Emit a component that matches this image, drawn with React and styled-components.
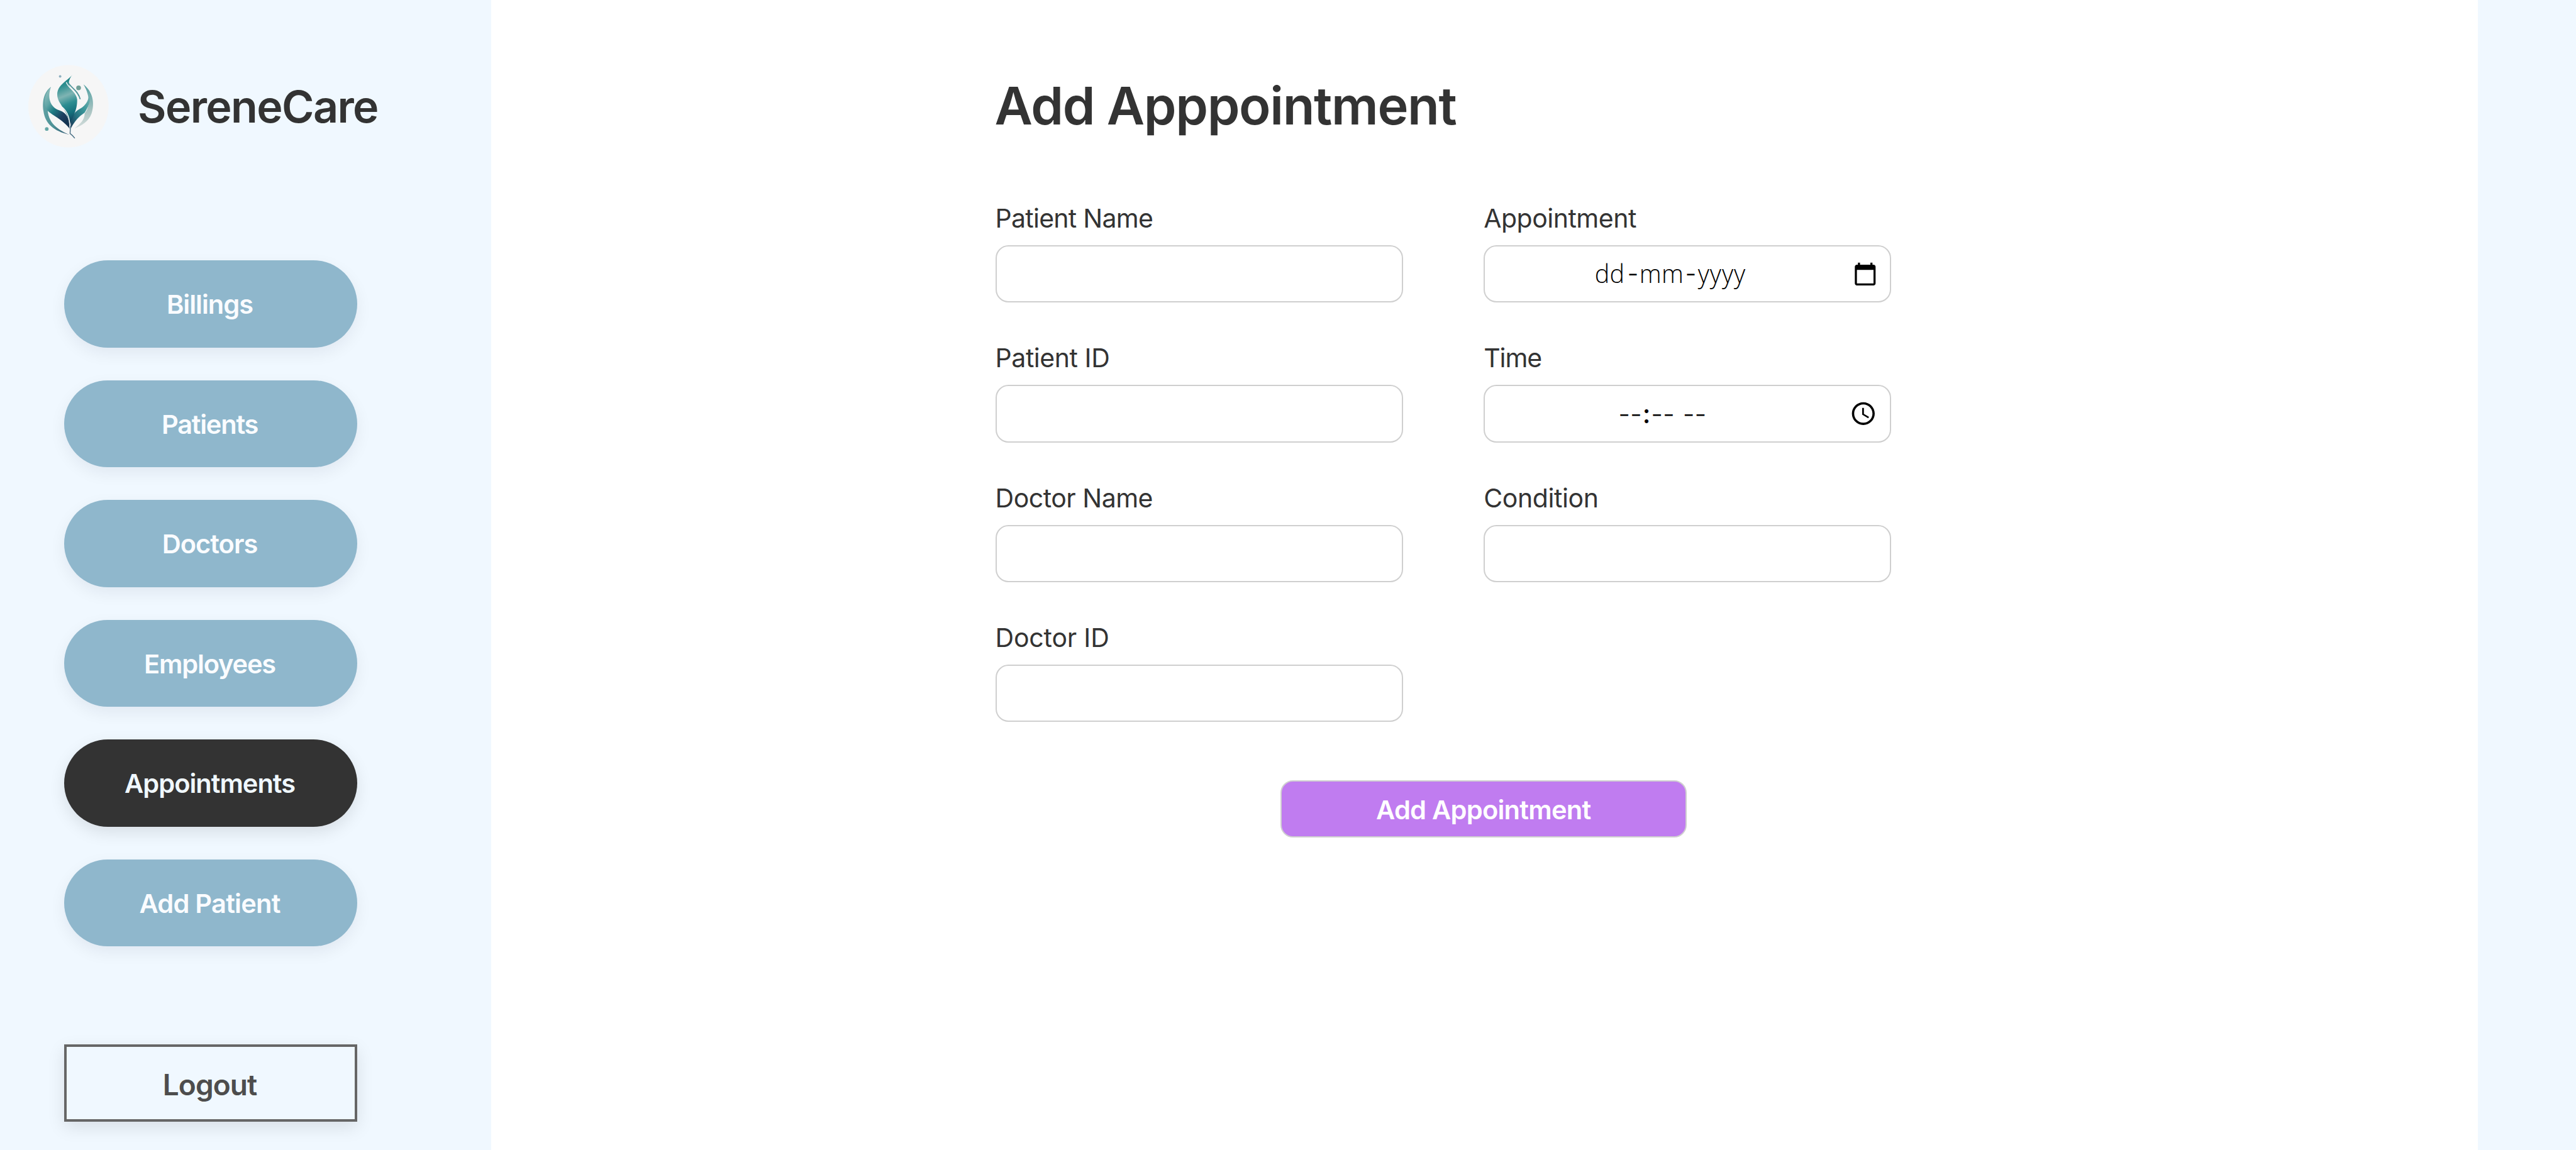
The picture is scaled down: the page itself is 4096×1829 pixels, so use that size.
import React from "react";
import styled, { createGlobalStyle } from "styled-components";

const GlobalStyle = createGlobalStyle`
  * { box-sizing: border-box; }
  body {
    margin: 0;
    background: #f0f8ff;
    color: #333333;
    font-family: Inter, "Liberation Sans", sans-serif;
  }
`;

const Page = styled.div`
  display: flex;
  width: 4096px;
  height: 1829px;
  overflow: hidden;
`;

const Sidebar = styled.aside`
  flex: none;
  width: 781px;
  padding: 103px 0 0 45px;
  background: #f0f8ff;
`;

const Brand = styled.div`
  display: flex;
  align-items: center;
  gap: 46px;
  height: 132px;
`;

const BrandName = styled.div`
  font-size: 70px;
  line-height: 84px;
  font-weight: 600;
  letter-spacing: -1.64px;
  padding-top: 1px;
`;

const Nav = styled.nav`
  display: flex;
  flex-direction: column;
  gap: 51.8px;
  margin: 179.3px 0 0 56.5px;
  width: 466px;
`;

const NavButton = styled.button`
  height: 138.7px;
  padding: 1.5px 2px 0 0;
  border: 0;
  border-radius: 70px;
  background: ${(p) => (p.$active ? "#333333" : "#8fb7cc")};
  color: ${(p) => (p.$active ? "#f0f8ff" : "#fafcff")};
  box-shadow: 0 9px 26px ${(p) => (p.$active ? "rgba(0, 0, 0, 0.1)" : "rgba(20, 0, 40, 0.065)")};
  font: 600 41.6px Inter, "Liberation Sans", sans-serif;
  letter-spacing: ${(p) => p.$tracking}px;
`;

const LogoutButton = styled.button`
  display: block;
  width: 466px;
  height: 123px;
  margin: 155.3px 0 0 56.5px;
  padding: 5px 2px 0 0;
  border: 4px solid #666666;
  background: #f0f8ff;
  color: #4d4d4d;
  box-shadow: 0 9px 26px rgba(0, 0, 0, 0.1);
  font: 600 46px Inter, "Liberation Sans", sans-serif;
  letter-spacing: -0.98px;
`;

const Main = styled.main`
  flex: none;
  width: 3159px;
  padding: 118.3px 0 0 801.6px;
  background: #ffffff;
`;

const Heading = styled.h1`
  margin: 0 0 103.5px -1px;
  font-size: 83px;
  line-height: 100px;
  font-weight: 600;
  letter-spacing: -1.36px;
`;

const Columns = styled.div`
  display: flex;
  align-items: flex-start;
  gap: 128.6px;
`;

const Column = styled.div`
  display: flex;
  flex-direction: column;
  gap: 63px;
  width: 648px;
`;

const Field = styled.div`
  display: flex;
  flex-direction: column;
  gap: 17px;
`;

const Label = styled.label`
  font-size: 41px;
  line-height: 51px;
  font-weight: 400;
  letter-spacing: ${(p) => p.$tracking}px;
`;

const Control = styled.div`
  display: flex;
  align-items: center;
  height: 91.4px;
  padding: 0 ${(p) => p.$end || 0}px 0 ${(p) => p.$start || 0}px;
  border: 2px solid #cfcfcf;
  border-radius: 20.5px;
  background: #ffffff;
  color: #000000;
`;

const DateParts = styled.div`
  display: grid;
  grid-template-columns: 51px 20px 72px 20px auto;
  align-items: center;
  font: 350 39.5px "Open Sans", "Liberation Sans", sans-serif;
  letter-spacing: 0.4px;
`;

const Year = styled.span`
  padding-left: 1px;
  letter-spacing: 1px;
`;

const TimeParts = styled.div`
  display: grid;
  grid-template-columns: 52px 50.5px auto;
  font: 300 41.6px Inter, "Liberation Sans", sans-serif;
`;

const Dash = styled.span`
  text-align: center;
  font-family: Inter, "Liberation Sans", sans-serif;
`;

const HourDashes = styled.span`
  display: flex;
  justify-content: space-between;
`;

const Colon = styled.span`
  flex: 1;
  text-align: center;
  font-weight: 500;
`;

const PickerIcon = styled.svg`
  flex: none;
  margin-left: auto;
  width: ${(p) => p.$size}px;
  height: ${(p) => p.$size}px;
`;

const SubmitButton = styled.button`
  display: block;
  width: 646.4px;
  height: 91px;
  margin: 92.5px 0 0 453.4px;
  padding: 4px 1px 0 0;
  border: 2.5px solid #d0d0d0;
  border-radius: 20px;
  background: #c07cf0;
  color: #ffffff;
  font: 600 41.6px Inter, "Liberation Sans", sans-serif;
  letter-spacing: -0.76px;
`;

const LogoSvg = styled.svg`
  flex: none;
  width: 128px;
  height: 132px;
`;

function Logo() {
  return (
    <LogoSvg viewBox="-22 -2 445 458">
      <defs>
        <linearGradient id="bud" x1="0" y1="0" x2="0.15" y2="1">
          <stop offset="0" stopColor="#0b7478" />
          <stop offset="0.25" stopColor="#2f8f90" />
          <stop offset="0.45" stopColor="#7fb4b3" />
          <stop offset="0.62" stopColor="#2d8d91" />
          <stop offset="0.8" stopColor="#16707c" />
          <stop offset="1" stopColor="#143c5a" />
        </linearGradient>
        <linearGradient id="left" x1="0" y1="0" x2="0.7" y2="1">
          <stop offset="0" stopColor="#9fc6c3" />
          <stop offset="0.35" stopColor="#5fa5a6" />
          <stop offset="0.55" stopColor="#1f7c84" />
          <stop offset="0.8" stopColor="#1d3f60" />
          <stop offset="1" stopColor="#143350" />
        </linearGradient>
        <linearGradient id="right" x1="1" y1="0" x2="0" y2="1">
          <stop offset="0" stopColor="#7fb5b5" />
          <stop offset="0.4" stopColor="#3b979a" />
          <stop offset="0.7" stopColor="#26707f" />
          <stop offset="1" stopColor="#163655" />
        </linearGradient>
        <linearGradient id="edge" x1="0" y1="0" x2="0" y2="1">
          <stop offset="0" stopColor="#4f9ea0" />
          <stop offset="0.6" stopColor="#a9c4c2" />
          <stop offset="1" stopColor="#d3dddc" />
        </linearGradient>
        <linearGradient id="sweep" x1="0" y1="0" x2="1" y2="1">
          <stop offset="0" stopColor="#6aa9aa" />
          <stop offset="0.6" stopColor="#4e9297" />
          <stop offset="1" stopColor="#2f5570" />
        </linearGradient>
      </defs>
      <ellipse cx="200" cy="227" rx="222" ry="228" fill="#f6f6f6" />
      <path fill="url(#sweep)" d="M103 120C62 150 54 205 62 255C72 325 120 365 205 384C140 356 95 322 86 258C84 205 84 160 103 120Z" />
      <path fill="url(#left)" d="M103 120C66 158 62 205 76 238C92 272 160 290 206 350C205 296 192 264 150 250C98 232 82 178 103 120Z" />
      <path fill="url(#edge)" d="M283 106C336 146 346 212 328 266C312 314 272 332 233 350C268 322 288 304 290 266C314 240 326 176 283 106Z" />
      <path fill="url(#right)" d="M314 150C326 188 318 216 290 262C258 284 236 306 213 350C210 296 226 262 262 242C300 222 314 190 314 150Z" />
      <path fill="url(#bud)" d="M222 52C192 88 139 108 138 162C138 218 198 238 208 345C216 288 250 258 248 190C246 152 200 128 202 98C203 80 212 64 222 52Z" />
      <path fill="none" stroke="#f6f6f6" strokeWidth="5" d="M188 94C200 130 240 136 254 192" />
      <path fill="none" stroke="#4c9297" strokeWidth="6" d="M199 96C214 126 252 138 265 188" />
      <path fill="none" stroke="#f6f6f6" strokeWidth="5" d="M166 232C196 258 208 300 208 345" />
      <path fill="none" stroke="#4a7186" strokeWidth="5" d="M211 335L209 378C220 386 228 394 235 404" />
      <circle cx="154" cy="62" r="7" fill="#8fb0c0" />
      <circle cx="256" cy="125" r="13" fill="#71a098" />
      <circle cx="80" cy="353" r="10" fill="#65a7a6" />
    </LogoSvg>
  );
}

const navItems = [
  { label: "Billings", tracking: -1.02 },
  { label: "Patients", tracking: -1.25 },
  { label: "Doctors", tracking: -1 },
  { label: "Employees", tracking: -1.2 },
  { label: "Appointments", tracking: -1.02, active: true },
  { label: "Add Patient", tracking: -0.78 },
];

const textFields = [
  { label: "Patient Name", tracking: -0.74 },
  { label: "Patient ID", tracking: -0.45 },
  { label: "Doctor Name", tracking: -0.5 },
  { label: "Doctor ID", tracking: -0.2 },
];

export default function App() {
  return (
    <Page>
      <GlobalStyle />
      <Sidebar>
        <Brand>
          <Logo />
          <BrandName>SereneCare</BrandName>
        </Brand>
        <Nav>
          {navItems.map((item) => (
            <NavButton key={item.label} $active={item.active} $tracking={item.tracking}>
              {item.label}
            </NavButton>
          ))}
        </Nav>
        <LogoutButton>Logout</LogoutButton>
      </Sidebar>
      <Main>
        <Heading>Add Apppointment</Heading>
        <Columns>
          <Column>
            {textFields.map((field) => (
              <Field key={field.label}>
                <Label $tracking={field.tracking}>{field.label}</Label>
                <Control />
              </Field>
            ))}
          </Column>
          <Column>
            <Field>
              <Label $tracking={-0.5}>Appointment</Label>
              <Control $start={174.5} $end={19.5}>
                <DateParts>
                  <span>dd</span>
                  <Dash>-</Dash>
                  <span>mm</span>
                  <Dash>-</Dash>
                  <Year>yyyy</Year>
                </DateParts>
                <PickerIcon $size={39.6} viewBox="0 0 24 24">
                  <path d="M20 3h-1V1h-2v2H7V1H5v2H4c-1.1 0-2 .9-2 2v16c0 1.1.9 2 2 2h16c1.1 0 2-.9 2-2V5c0-1.1-.9-2-2-2zm0 18H4V8h16v13z" />
                </PickerIcon>
              </Control>
            </Field>
            <Field>
              <Label $tracking={-1.1}>Time</Label>
              <Control $start={212} $end={20.5}>
                <TimeParts>
                  <HourDashes>
                    --<Colon>:</Colon>
                  </HourDashes>
                  <span>--</span>
                  <span>--</span>
                </TimeParts>
                <PickerIcon $size={43.6} viewBox="0 0 24 24">
                  <path d="M11.99 2C6.47 2 2 6.48 2 12s4.47 10 9.99 10C17.52 22 22 17.52 22 12S17.52 2 11.99 2zM12 20c-4.42 0-8-3.58-8-8s3.58-8 8-8 8 3.58 8 8-3.58 8-8 8zm.5-13H11v6l5.25 3.15.75-1.23-4.5-2.67z" />
                </PickerIcon>
              </Control>
            </Field>
            <Field>
              <Label $tracking={-0.4}>Condition</Label>
              <Control />
            </Field>
          </Column>
        </Columns>
        <SubmitButton>Add Appointment</SubmitButton>
      </Main>
    </Page>
  );
}
